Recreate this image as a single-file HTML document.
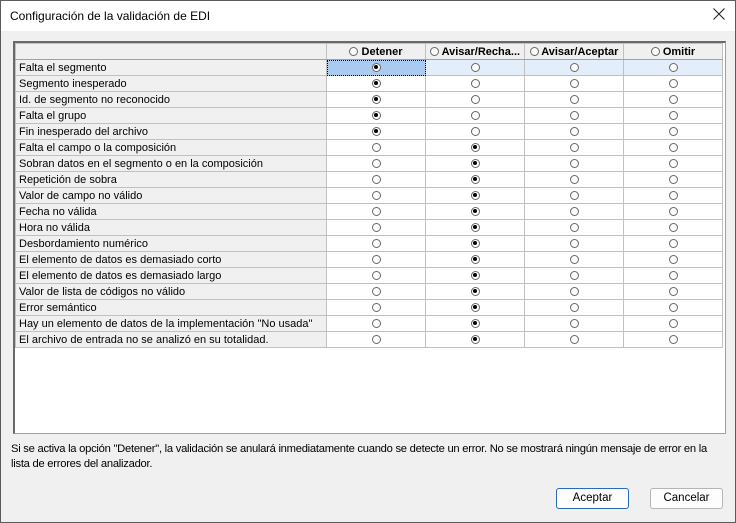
<!DOCTYPE html>
<html><head><meta charset="utf-8"><style>
*{box-sizing:border-box}
body{margin:0;width:736px;height:523px;background:#fff;font-family:"Liberation Sans",sans-serif;overflow:hidden}
.win{position:absolute;left:0;top:0;width:736px;height:523px;border:1px solid #5a5a5a;background:#f0f0f0}
.title{position:absolute;left:0;top:0;width:734px;height:30px;background:#fff;font-size:12px;color:#000;padding:8px 0 0 9px}
.x{position:absolute;right:9px;top:6px}
.frame{position:absolute;left:12px;top:40px;width:713px;height:393px;background:#fff;border:1px solid #a0a0a0;border-left:2px solid #696969;border-top:2px solid #696969}
table{border-collapse:collapse;table-layout:fixed;position:absolute;left:0;top:0}
td{height:16px;padding:0;border:1px solid #c0c0c0;font-size:11px;white-space:nowrap;overflow:hidden}
td.l{background:#f0f0f0;padding-left:3px;width:311px}
td.c{width:99px;text-align:center;background:#fff}
tr.h td{background:#f0f0f0;font-weight:bold;text-align:center;border-bottom:1px solid #a0a0a0}
tr.s td.c{background:#e3eefa}
tr.s td.f{background:#a9cbf0;outline:1px dotted #000;outline-offset:-1px}
.r{display:inline-block;width:9px;height:9px;border:1px solid #666;border-radius:50%;vertical-align:-1px;position:relative;background:#fff}
.r.on::after{content:"";position:absolute;left:1.5px;top:1.5px;width:4px;height:4px;border-radius:50%;background:#000}
.desc{position:absolute;left:10px;top:441px;width:716px;font-size:11.2px;line-height:15px;color:#000;letter-spacing:-0.25px}
.btn{position:absolute;top:487px;width:73px;height:21px;border:1px solid #b5b5b5;border-radius:3px;background:#fdfdfd;font-size:11.5px;text-align:center;line-height:19px}
.btn.d{border:1px solid #2a68b8}
</style></head><body>
<div class="win">
<div class="title">Configuración de la validación de EDI</div>
<svg class="x" width="14" height="14" viewBox="0 0 14 14"><path d="M1.5 1.5L12.5 12.5M12.5 1.5L1.5 12.5" stroke="#222" stroke-width="1.1"/></svg>
<div class="frame">
<table>
<tr class="h"><td class="l"></td><td class="c" style="background:#f0f0f0"><span class="r"></span> Detener</td><td class="c" style="background:#f0f0f0"><span class="r"></span> Avisar/Recha...</td><td class="c" style="background:#f0f0f0"><span class="r"></span> Avisar/Aceptar</td><td class="c" style="background:#f0f0f0"><span class="r"></span> Omitir</td></tr>
<tr class="s"><td class="l">Falta el segmento</td><td class="c f"><span class="r on"></span></td><td class="c"><span class="r"></span></td><td class="c"><span class="r"></span></td><td class="c"><span class="r"></span></td></tr>
<tr><td class="l">Segmento inesperado</td><td class="c"><span class="r on"></span></td><td class="c"><span class="r"></span></td><td class="c"><span class="r"></span></td><td class="c"><span class="r"></span></td></tr>
<tr><td class="l">Id. de segmento no reconocido</td><td class="c"><span class="r on"></span></td><td class="c"><span class="r"></span></td><td class="c"><span class="r"></span></td><td class="c"><span class="r"></span></td></tr>
<tr><td class="l">Falta el grupo</td><td class="c"><span class="r on"></span></td><td class="c"><span class="r"></span></td><td class="c"><span class="r"></span></td><td class="c"><span class="r"></span></td></tr>
<tr><td class="l">Fin inesperado del archivo</td><td class="c"><span class="r on"></span></td><td class="c"><span class="r"></span></td><td class="c"><span class="r"></span></td><td class="c"><span class="r"></span></td></tr>
<tr><td class="l">Falta el campo o la composición</td><td class="c"><span class="r"></span></td><td class="c"><span class="r on"></span></td><td class="c"><span class="r"></span></td><td class="c"><span class="r"></span></td></tr>
<tr><td class="l">Sobran datos en el segmento o en la composición</td><td class="c"><span class="r"></span></td><td class="c"><span class="r on"></span></td><td class="c"><span class="r"></span></td><td class="c"><span class="r"></span></td></tr>
<tr><td class="l">Repetición de sobra</td><td class="c"><span class="r"></span></td><td class="c"><span class="r on"></span></td><td class="c"><span class="r"></span></td><td class="c"><span class="r"></span></td></tr>
<tr><td class="l">Valor de campo no válido</td><td class="c"><span class="r"></span></td><td class="c"><span class="r on"></span></td><td class="c"><span class="r"></span></td><td class="c"><span class="r"></span></td></tr>
<tr><td class="l">Fecha no válida</td><td class="c"><span class="r"></span></td><td class="c"><span class="r on"></span></td><td class="c"><span class="r"></span></td><td class="c"><span class="r"></span></td></tr>
<tr><td class="l">Hora no válida</td><td class="c"><span class="r"></span></td><td class="c"><span class="r on"></span></td><td class="c"><span class="r"></span></td><td class="c"><span class="r"></span></td></tr>
<tr><td class="l">Desbordamiento numérico</td><td class="c"><span class="r"></span></td><td class="c"><span class="r on"></span></td><td class="c"><span class="r"></span></td><td class="c"><span class="r"></span></td></tr>
<tr><td class="l">El elemento de datos es demasiado corto</td><td class="c"><span class="r"></span></td><td class="c"><span class="r on"></span></td><td class="c"><span class="r"></span></td><td class="c"><span class="r"></span></td></tr>
<tr><td class="l">El elemento de datos es demasiado largo</td><td class="c"><span class="r"></span></td><td class="c"><span class="r on"></span></td><td class="c"><span class="r"></span></td><td class="c"><span class="r"></span></td></tr>
<tr><td class="l">Valor de lista de códigos no válido</td><td class="c"><span class="r"></span></td><td class="c"><span class="r on"></span></td><td class="c"><span class="r"></span></td><td class="c"><span class="r"></span></td></tr>
<tr><td class="l">Error semántico</td><td class="c"><span class="r"></span></td><td class="c"><span class="r on"></span></td><td class="c"><span class="r"></span></td><td class="c"><span class="r"></span></td></tr>
<tr><td class="l">Hay un elemento de datos de la implementación "No usada"</td><td class="c"><span class="r"></span></td><td class="c"><span class="r on"></span></td><td class="c"><span class="r"></span></td><td class="c"><span class="r"></span></td></tr>
<tr><td class="l">El archivo de entrada no se analizó en su totalidad.</td><td class="c"><span class="r"></span></td><td class="c"><span class="r on"></span></td><td class="c"><span class="r"></span></td><td class="c"><span class="r"></span></td></tr>
</table>
</div>
<div class="desc">Si se activa la opción "Detener", la validación se anulará inmediatamente cuando se detecte un error. No se mostrará ningún mensaje de error en la lista de errores del analizador.</div>
<div class="btn d" style="left:555px">Aceptar</div>
<div class="btn" style="left:649px">Cancelar</div>
</div>
</body></html>
